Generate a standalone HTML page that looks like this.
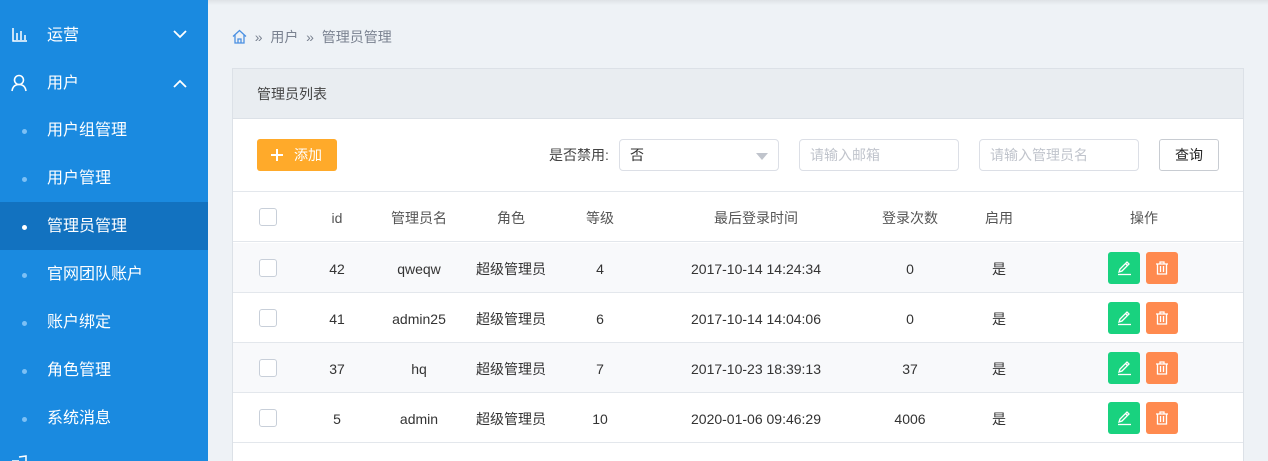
<!DOCTYPE html>
<html><head><meta charset="utf-8"><style>
*{margin:0;padding:0;box-sizing:border-box}
html,body{width:1268px;height:461px;overflow:hidden}
body{background:#eef2f6;font-family:"Liberation Sans","Noto Sans CJK SC",sans-serif;position:relative;font-size:14px;color:#333}
.sb{position:absolute;left:0;top:0;width:208px;height:461px;background:#1a8ae0;color:#fff;overflow:hidden}
.it{position:absolute;left:0;width:208px;height:48px;line-height:50px;font-size:16px}
.it .t{position:absolute;left:47px}
.dot{position:absolute;left:22px;top:23px;width:5px;height:5px;border-radius:50%;background:#7cc0f5}
.act{background:#1272c0}
.act .dot{background:#fff}
.top{position:absolute;left:208px;top:0;right:0;height:5px;background:linear-gradient(#dfe2e6,#eef2f6)}
.bc{position:absolute;left:232px;top:27px;font-size:14px;color:#7a8290}
.card{position:absolute;left:232px;top:68px;width:1012px;height:400px;background:#fff;border:1px solid #dce1e7}
.ch{height:50px;background:#e9edf1;border-bottom:1px solid #dce1e7;line-height:50px;padding-left:24px;font-size:14px;color:#444}
.btn{position:absolute;border-radius:3px}
.inp{position:absolute;top:70px;height:32px;border:1px solid #dcdfe6;border-radius:4px;line-height:31px;padding-left:10px;color:#c0c4cc;font-size:14px}
.row{position:absolute;left:0;width:1010px;height:50px;border-bottom:1px solid #e3e7ec}
.c{position:absolute;top:1px;line-height:50px;transform:translateX(-50%);white-space:nowrap;font-size:14px;color:#333}
.cb{position:absolute;left:26px;top:16px;width:18px;height:18px;border:1px solid #c8cfd9;border-radius:3px;background:#fff}
.hd .c{color:#555}
.e{position:absolute;left:875px;top:9px;width:32px;height:32px;border-radius:3px;background:#19d27f}
.d{position:absolute;left:913px;top:9px;width:32px;height:32px;border-radius:3px;background:#ff8a4f}
</style></head><body>
<div class="sb">
 <div class="it" style="top:11px">
  <svg style="position:absolute;left:12px;top:17px" width="16" height="14" viewBox="0 0 16 14" fill="none" stroke="#fff" stroke-width="1.5"><path d="M1 0V13H15M5 5V12M9 3V12M13 7V12"/></svg>
  <span class="t">运营</span>
  <svg style="position:absolute;left:173px;top:19px" width="14" height="9" viewBox="0 0 14 9" fill="none" stroke="#fff" stroke-width="1.8"><path d="M1 1L7 7L13 1"/></svg></div>
 <div class="it" style="top:59px">
  <svg style="position:absolute;left:11px;top:15px" width="16" height="18" viewBox="0 0 16 18" fill="none" stroke="#fff" stroke-width="1.6"><circle cx="8" cy="6" r="4.5"/><path d="M1 17Q2 10.5 8 10.5Q14 10.5 15 17"/></svg>
  <span class="t">用户</span>
  <svg style="position:absolute;left:173px;top:20px" width="14" height="9" viewBox="0 0 14 9" fill="none" stroke="#fff" stroke-width="1.8"><path d="M1 8L7 2L13 8"/></svg></div>
 <div class="it" style="top:106px"><i class="dot"></i><span class="t">用户组管理</span></div>
 <div class="it" style="top:154px"><i class="dot"></i><span class="t">用户管理</span></div>
 <div class="it act" style="top:202px"><i class="dot"></i><span class="t">管理员管理</span></div>
 <div class="it" style="top:250px"><i class="dot"></i><span class="t">官网团队账户</span></div>
 <div class="it" style="top:298px"><i class="dot"></i><span class="t">账户绑定</span></div>
 <div class="it" style="top:346px"><i class="dot"></i><span class="t">角色管理</span></div>
 <div class="it" style="top:394px"><i class="dot"></i><span class="t">系统消息</span></div>
 <svg style="position:absolute;left:11px;top:455px" width="16" height="10" viewBox="0 0 16 10" fill="none" stroke="#fff" stroke-width="1.5"><path d="M1 6H8M8 2L15 1V10"/></svg>
</div>
<div class="top"></div>
<div class="bc"><svg width="15" height="15" viewBox="0 0 15 15" fill="none" stroke="#4a90e2" stroke-width="1.3" style="vertical-align:-2px"><path d="M1 7.5L7.5 1.5L14 7.5M3 6V14H12V6M6 14V10H9V14"/></svg>&nbsp; » &nbsp;用户 &nbsp;» &nbsp;管理员管理</div>
<div class="card">
 <div class="ch">管理员列表</div>
 <div class="btn" style="left:24px;top:70px;width:80px;height:32px;background:#ffaa2a;color:#fff;line-height:33px;font-size:14px"><svg style="position:absolute;left:14px;top:10px" width="12" height="12" viewBox="0 0 12 12" stroke="#fff" stroke-width="2"><path d="M6 0V12M0 6H12"/></svg><span style="position:absolute;left:37px">添加</span></div>
 <div style="position:absolute;left:316px;top:70px;line-height:32px;color:#444">是否禁用:</div>
 <div class="inp" style="left:386px;width:160px;color:#333">否<span style="position:absolute;right:10px;top:13px;border-left:6px solid transparent;border-right:6px solid transparent;border-top:7px solid #c0c4cc"></span></div>
 <div class="inp" style="left:566px;width:160px">请输入邮箱</div>
 <div class="inp" style="left:746px;width:160px">请输入管理员名</div>
 <div class="btn" style="left:926px;top:70px;width:60px;height:32px;border:1px solid #c8ccd2;line-height:31px;text-align:center;color:#222">查询</div>
 <div style="position:absolute;left:0;top:122px;width:1010px;border-top:1px solid #e3e7ec"></div>
 <div class="row hd" style="top:123px"><i class="cb"></i><span class="c" style="left:104px">id</span><span class="c" style="left:186px">管理员名</span><span class="c" style="left:278px">角色</span><span class="c" style="left:367px">等级</span><span class="c" style="left:523px">最后登录时间</span><span class="c" style="left:677px">登录次数</span><span class="c" style="left:766px">启用</span><span class="c" style="left:911px">操作</span></div>
 <div class="row" style="top:174px;background:#f8f9fb"><i class="cb"></i><span class="c" style="left:104px">42</span><span class="c" style="left:186px">qweqw</span><span class="c" style="left:278px">超级管理员</span><span class="c" style="left:367px">4</span><span class="c" style="left:523px">2017-10-14 14:24:34</span><span class="c" style="left:677px">0</span><span class="c" style="left:766px">是</span><i class="e"></i><i class="d"></i></div>
 <div class="row" style="top:224px"><i class="cb"></i><span class="c" style="left:104px">41</span><span class="c" style="left:186px">admin25</span><span class="c" style="left:278px">超级管理员</span><span class="c" style="left:367px">6</span><span class="c" style="left:523px">2017-10-14 14:04:06</span><span class="c" style="left:677px">0</span><span class="c" style="left:766px">是</span><i class="e"></i><i class="d"></i></div>
 <div class="row" style="top:274px;background:#f8f9fb"><i class="cb"></i><span class="c" style="left:104px">37</span><span class="c" style="left:186px">hq</span><span class="c" style="left:278px">超级管理员</span><span class="c" style="left:367px">7</span><span class="c" style="left:523px">2017-10-23 18:39:13</span><span class="c" style="left:677px">37</span><span class="c" style="left:766px">是</span><i class="e"></i><i class="d"></i></div>
 <div class="row" style="top:324px"><i class="cb"></i><span class="c" style="left:104px">5</span><span class="c" style="left:186px">admin</span><span class="c" style="left:278px">超级管理员</span><span class="c" style="left:367px">10</span><span class="c" style="left:523px">2020-01-06 09:46:29</span><span class="c" style="left:677px">4006</span><span class="c" style="left:766px">是</span><i class="e"></i><i class="d"></i></div>
</div>
<script>
document.querySelectorAll('.e').forEach(function(e){e.innerHTML='<svg width="32" height="32" viewBox="0 0 32 32" fill="none" stroke="#fff" stroke-width="1.3"><path d="M11 20L12 17L19 10L21 12L14 19Z M17.5 11.5L19.5 13.5"/><path d="M10 22.5H23"/></svg>'});
document.querySelectorAll('.d').forEach(function(e){e.innerHTML='<svg width="32" height="32" viewBox="0 0 32 32" fill="none" stroke="#fff" stroke-width="1.3"><path d="M10 12H22M14 12V10H18V12M11.5 12V22H20.5V12M14.5 14V20M17.5 14V20"/></svg>'});
</script>
</body></html>
